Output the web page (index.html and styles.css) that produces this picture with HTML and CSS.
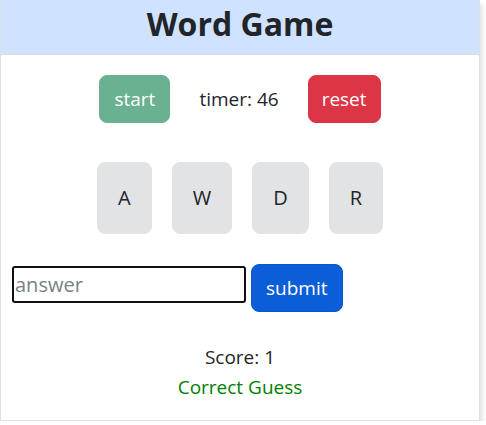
FILE: index.html
```html
<!DOCTYPE html>
<html lang="en">
<head>
<meta charset="utf-8">
<title>Word Game</title>
<link rel="stylesheet" href="styles.css">
</head>
<body>
  <div class="card">
    <header class="card-header">
      <h1 class="title">Word Game</h1>
    </header>
    <main class="card-body">
      <div class="controls">
        <button class="btn btn-start" disabled>start</button>
        <span class="timer">timer: 46</span>
        <button class="btn btn-reset">reset</button>
      </div>
      <div class="tiles">
        <span class="tile">A</span>
        <span class="tile">W</span>
        <span class="tile">D</span>
        <span class="tile">R</span>
      </div>
      <form class="answer-form">
        <input class="answer" type="text" placeholder="answer">
        <button type="button" class="btn btn-submit">submit</button>
      </form>
      <div class="result">
        <p class="score">Score: 1</p>
        <p class="feedback">Correct Guess</p>
      </div>
    </main>
  </div>
</body>
</html>
```
FILE: styles.css
```css
* { box-sizing: border-box; }
html, body { margin: 0; padding: 0; background: #fff; }
body {
  font-family: "Open Sans", "Noto Sans", sans-serif;
  font-size: 19px;
  line-height: 30px;
  color: #212529;
}
.card {
  width: 480px;
  height: 421px;
  border: 1px solid #dcdfe3;
  border-top: 0;
  box-shadow: 3px 4px 4px rgba(0, 0, 0, 0.10);
  background: #fff;
}
.card-header {
  height: 55px;
  padding-top: 5px;
  background: #cfe2ff;
  border-bottom: 1px solid #d9dde2;
}
.title {
  margin: 0;
  text-align: center;
  font-size: 32px;
  font-weight: 700;
  line-height: 38px;
  color: #212529;
}
.card-body {
  display: flex;
  flex-direction: column;
}
.controls {
  display: flex;
  justify-content: center;
  align-items: center;
  gap: 29px;
  margin-top: 20px;
}
.btn {
  font-family: inherit;
  font-size: 19px;
  line-height: 30px;
  padding: 8px 14px;
  border: 1px solid transparent;
  border-radius: 8px;
  color: #fff;
}
.btn-start { background: #69b190; border-color: #69b190; }
.btn-reset { background: #dc3545; border-color: #dc3545; padding: 8px 13px; }
.btn-submit { background: #0b5ed7; border-color: #0a58ca; padding: 8px 14px; }
.timer { line-height: 30px; }
.tiles {
  display: flex;
  justify-content: center;
  gap: 20px;
  margin-top: 39px;
}
.tile {
  padding: 20px 20px;
  font-size: 20px;
  line-height: 30px;
  background: #e2e3e5;
  border: 1px solid #e2e3e5;
  border-radius: 8px;
}
.answer-form {
  display: flex;
  align-items: flex-start;
  gap: 5px;
  margin: 30px 0 0 11px;
}
.answer {
  width: 234px;
  height: 37px;
  margin-top: 2px;
  padding: 0 1px;
  font-family: inherit;
  font-size: 20px;
  color: #212529;
  border: 2px solid #101010;
  border-radius: 3px;
  outline: none;
  caret-color: #000;
}
.answer::placeholder { color: #7a7f86; }
.result {
  margin-top: 30px;
  text-align: center;
}
.result p { margin: 0; line-height: 30px; }
.feedback { color: #008000; }
```
